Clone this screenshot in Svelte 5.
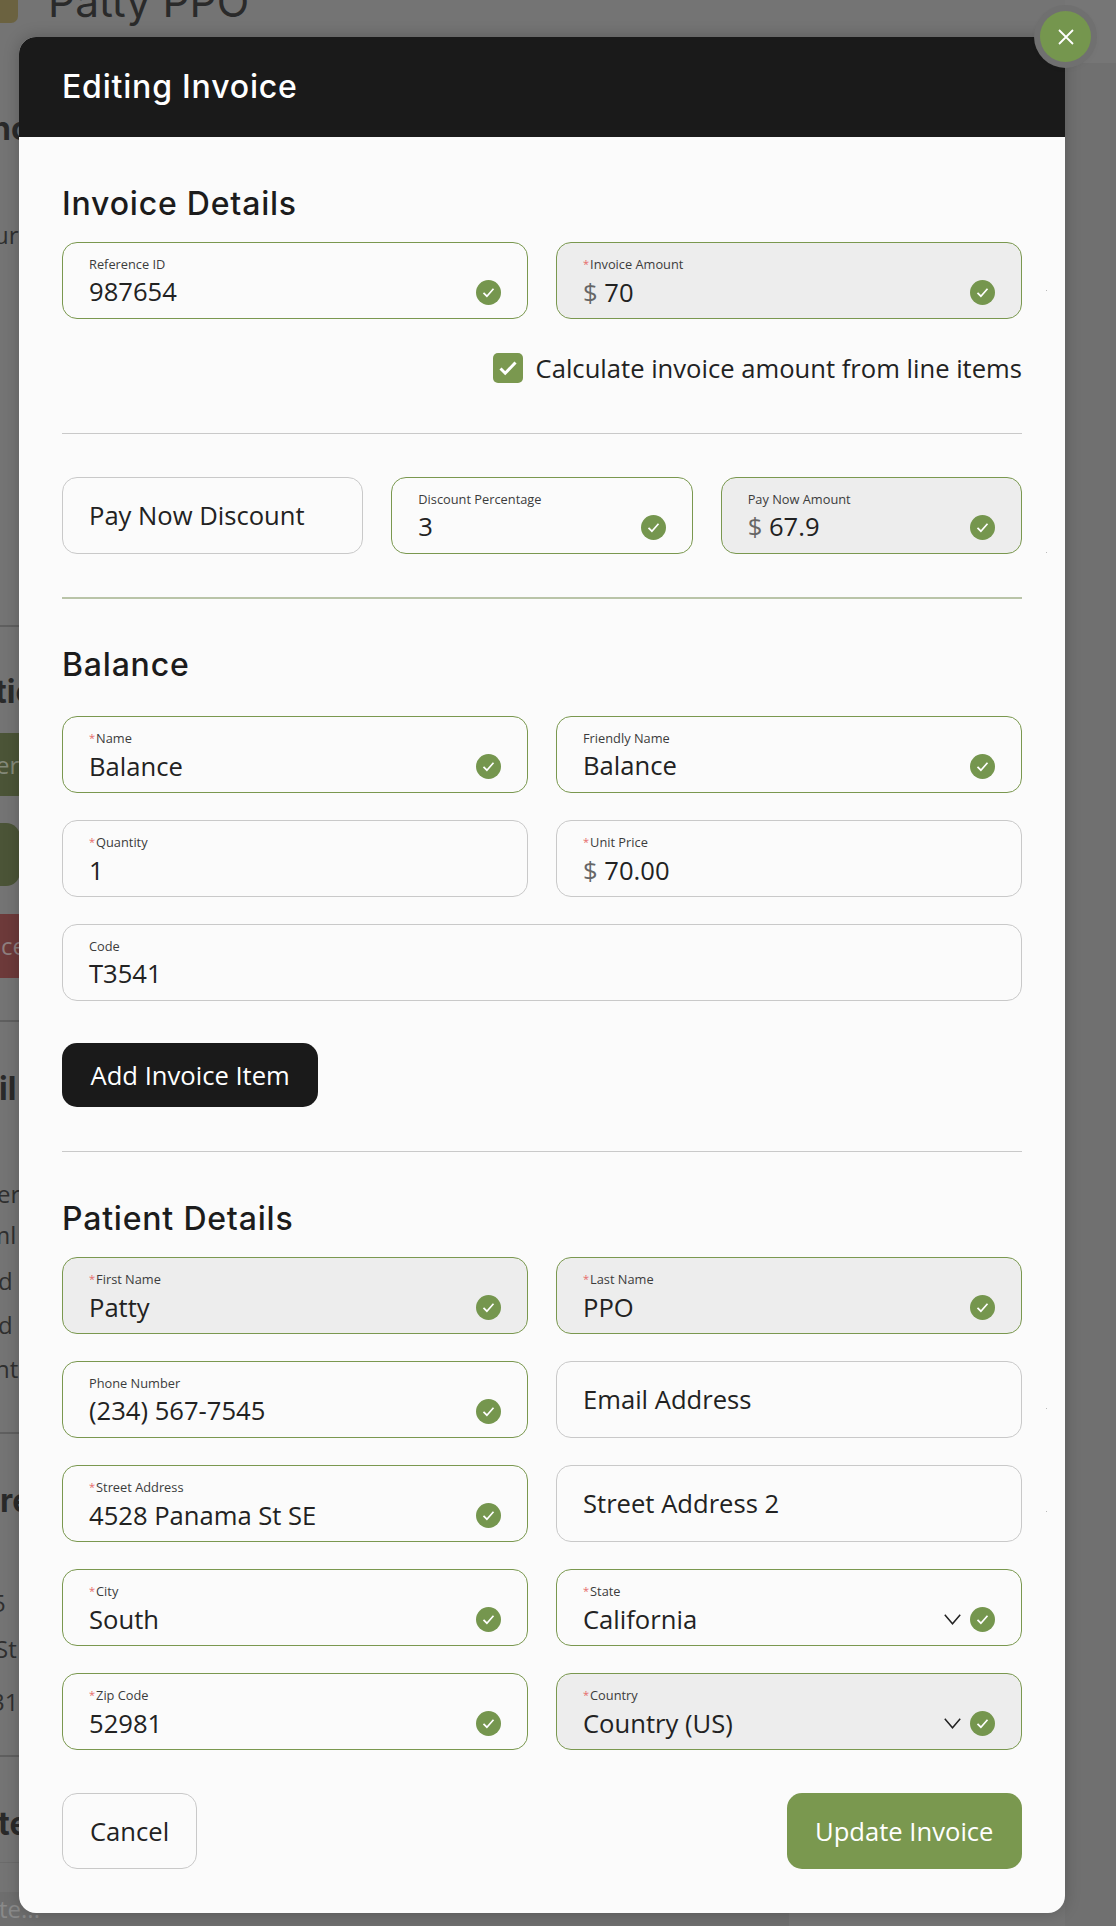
<script>
	// what peeks out from behind the modal, top to bottom (y = top edge of the row)
	const behind = [
		{ y: 109, h: 40, kind: 'head', x: -9, text: 'nc' },
		{ y: 219, h: 32, kind: 'copy', x: -6, text: 'ur' },
		{ y: 625, h: 2, kind: 'rule' },
		{ y: 672, h: 40, kind: 'head', x: -5, text: 'tio' },
		{ y: 733, h: 63, kind: 'green', x: -4, text: 'er' },
		{ y: 823, h: 63, kind: 'pill' },
		{ y: 914, h: 64, kind: 'red', x: 1, text: 'ce' },
		{ y: 1020, h: 2, kind: 'rule' },
		{ y: 1069, h: 40, kind: 'head', x: -1, text: 'il' },
		{ y: 1178, h: 32, kind: 'copy', x: -3, text: 'er' },
		{ y: 1219, h: 32, kind: 'copy', x: -12, text: 'ml' },
		{ y: 1265, h: 32, kind: 'copy', x: -2, text: 'd' },
		{ y: 1309, h: 32, kind: 'copy', x: -2, text: 'd' },
		{ y: 1353, h: 32, kind: 'copy', x: -5, text: 'nt' },
		{ y: 1432, h: 2, kind: 'rule' },
		{ y: 1481, h: 40, kind: 'head', x: 0, text: 're' },
		{ y: 1587, h: 32, kind: 'copy', x: -8, text: '5' },
		{ y: 1633, h: 32, kind: 'copy', x: -5, text: 'St' },
		{ y: 1686, h: 32, kind: 'copy', x: -9, text: '31' },
		{ y: 1755, h: 2, kind: 'rule' },
		{ y: 1804, h: 40, kind: 'head', x: -2, text: 'te' },
		{ y: 1862, h: 1, kind: 'rule faint' },
		{ y: 1892, h: 34, kind: 'copy note', x: -1, text: 'te...' }
	];
	const rows = behind.map((r, i) => ({
		...r,
		gap: r.y - (i ? behind[i - 1].y + behind[i - 1].h : 32)
	}));
</script>

{#snippet check()}
	<svg class="ok" width="25" height="25" viewBox="0 0 25 25" aria-hidden="true">
		<circle cx="12.5" cy="12.5" r="12.5" fill="#75964e" />
		<path d="M7.5 12.8l3.4 3.4 6.6-7.4" fill="none" stroke="#fff" stroke-width="1.7" />
	</svg>
{/snippet}

{#snippet field(label, value, opts = {})}
	<div class="field" class:valid={opts.valid} class:locked={opts.locked}>
		<div class="inner">
			<span class="label">{#if opts.req}<i>*</i>{/if}{label}</span>
			<span class="value">{#if opts.money}<em>$&nbsp;</em>{/if}{value}</span>
		</div>
		{#if opts.select}
			<svg class="chev" width="17" height="11" viewBox="0 0 17 11" aria-hidden="true">
				<path d="M.8.8l7.7 9 7.7-9" fill="none" stroke="#222" stroke-width="1.5" />
			</svg>
		{/if}
		{#if opts.valid}{@render check()}{/if}
		{#if opts.speck}<b class="speck" style="top:{opts.speck}px"></b>{/if}
	</div>
{/snippet}

{#snippet blank(text, speck)}
	<div class="field empty">
		<span class="value">{text}</span>
		{#if speck}<b class="speck" style="top:{speck}px"></b>{/if}
	</div>
{/snippet}

<div class="page">
	<div class="behind">
		<div class="top">
			<span class="avatar"></span>
			<span class="who">Patty PPO</span>
		</div>
		{#each rows as r}
			<div class="row {r.kind}" style="height:{r.h}px;line-height:{r.h}px;margin-top:{r.gap}px">
				{#if r.text}<span style="margin-left:{r.x}px">{r.text}</span>{/if}
			</div>
		{/each}
	</div>

	<div class="modal">
		<header>Editing Invoice</header>
		<button class="close" aria-label="Close">
			<svg width="16" height="16" viewBox="0 0 16 16" aria-hidden="true">
				<path d="M1 1l14 14M15 1L1 15" fill="none" stroke="#fff" stroke-width="1.8" />
			</svg>
		</button>

		<div class="body">
			<h2 class="first">Invoice Details</h2>
			<div class="two">
				{@render field('Reference ID', '987654', { valid: true })}
				{@render field('Invoice Amount', '70', { valid: true, locked: true, req: true, money: true, speck: 47 })}
			</div>
			<div class="calc">
				<span class="box">
					<svg width="30" height="30" viewBox="0 0 30 30" aria-hidden="true">
						<path d="M7.5 15.5l4.7 4.7L22.5 9.5" fill="none" stroke="#fff" stroke-width="3" />
					</svg>
				</span>
				Calculate invoice amount from line items
			</div>
			<hr class="thin after-calc" />
			<div class="three">
				{@render blank('Pay Now Discount')}
				{@render field('Discount Percentage', '3', { valid: true })}
				{@render field('Pay Now Amount', '67.9', { valid: true, locked: true, money: true, speck: 74 })}
			</div>
			<hr class="thick" />

			<h2 class="balance">Balance</h2>
			<div class="two">
				{@render field('Name', 'Balance', { valid: true, req: true })}
				{@render field('Friendly Name', 'Balance', { valid: true })}
				{@render field('Quantity', '1', { req: true })}
				{@render field('Unit Price', '70.00', { req: true, money: true })}
				<div class="wide">{@render field('Code', 'T3541')}</div>
			</div>
			<button class="btn dark">Add Invoice Item</button>
			<hr class="thin after-add" />

			<h2 class="patient">Patient Details</h2>
			<div class="two">
				{@render field('First Name', 'Patty', { valid: true, locked: true, req: true })}
				{@render field('Last Name', 'PPO', { valid: true, locked: true, req: true })}
				{@render field('Phone Number', '(234) 567-7545', { valid: true })}
				{@render blank('Email Address', 46)}
				{@render field('Street Address', '4528 Panama St SE', { valid: true, req: true })}
				{@render blank('Street Address 2', 45)}
				{@render field('City', 'South', { valid: true, req: true })}
				{@render field('State', 'California', { valid: true, req: true, select: true })}
				{@render field('Zip Code', '52981', { valid: true, req: true })}
				{@render field('Country', 'Country (US)', { valid: true, locked: true, req: true, select: true })}
			</div>

			<div class="actions">
				<button class="btn ghost">Cancel</button>
				<button class="btn go">Update Invoice</button>
			</div>
		</div>
	</div>
</div>

<style>
	:global(body) {
		margin: 0;
		font-family: 'Open Sans', 'Noto Sans', sans-serif;
	}
	.page {
		position: relative;
		width: 1116px;
		height: 1926px;
		overflow: hidden;
		background: linear-gradient(#767676 0 63px, #707070 63px) right / 51px 100% no-repeat, #747474;
		color: #222;
	}

	.behind {
		display: flex;
		flex-direction: column;
		width: 789px;
		height: 100%;
		color: #2f2f2f;
	}
	.top {
		display: flex;
		align-items: flex-start;
		flex: none;
		height: 60px;
		margin-top: -28px;
	}
	.avatar {
		width: 18px;
		height: 51px;
		background: #6b6240;
		border-radius: 0 7px 7px 0;
	}
	.who {
		margin-left: 30px;
		font: 400 42.5px/60px Inter, sans-serif;
		color: #2a2a2a;
	}
	.row {
		flex: none;
		white-space: nowrap;
		font-size: 24px;
	}
	.row span {
		display: inline-block;
	}
	.row.head {
		font: 700 32px/40px Inter, sans-serif;
		color: #2a2a2a;
	}
	.row.rule {
		background: #5f5f5f;
	}
	.row.faint {
		background: #6b6b6b;
	}
	.row.green {
		background: #4b5437;
		color: #858a7a;
	}
	.row.pill {
		width: 20px;
		background: #4b5437;
		border-radius: 0 14px 14px 0;
	}
	.row.red {
		background: #6d3a3a;
		color: #8f7f7f;
	}
	.row.note {
		background: rgba(0, 0, 0, 0.05);
		color: #8a8a8a;
	}

	.modal {
		position: absolute;
		left: 19px;
		top: 37px;
		width: 1046px;
		background: #fbfbfb;
		border-radius: 17px;
		box-shadow: 0 0 16px rgba(0, 0, 0, 0.22);
	}
	header {
		height: 100px;
		padding-left: 43px;
		background: #1a1a1a;
		border-radius: 17px 0 0 0;
		color: #fff;
		font: 500 32px/100px Inter, sans-serif;
		letter-spacing: 0.8px;
	}
	.close {
		position: absolute;
		right: -26px;
		top: -26px;
		display: flex;
		align-items: center;
		justify-content: center;
		width: 51px;
		height: 51px;
		padding: 0;
		border: 0;
		border-radius: 50%;
		background: #75964e;
		box-shadow: 0 0 0 6px #707070, 0 2px 10px rgba(0, 0, 0, 0.15);
	}

	.body {
		padding: 46px 43px 44px;
	}
	h2 {
		margin: 0;
		height: 40px;
		font: 500 32px/42px Inter, sans-serif;
		letter-spacing: 0.8px;
		color: #1c1c1c;
	}
	h2.first {
		margin-bottom: 19px;
	}
	h2.balance {
		margin-top: 45px;
		margin-bottom: 32px;
	}
	h2.patient {
		margin-top: 46px;
		margin-bottom: 19px;
	}

	.two,
	.three {
		display: grid;
		grid-auto-rows: 77px;
		gap: 27px 28px;
	}
	.two {
		grid-template-columns: 1fr 1fr;
	}
	.three {
		grid-template-columns: 1fr 1fr 1fr;
	}
	.wide {
		grid-column: 1 / -1;
		display: grid;
	}

	.field {
		position: relative;
		display: flex;
		align-items: center;
		box-sizing: border-box;
		padding: 0 26px;
		border: 1.5px solid #c9c9c9;
		border-radius: 15px;
		min-width: 0;
	}
	.field.valid {
		border-color: #7a984f;
	}
	.field.locked {
		background: #ededed;
	}
	.inner {
		display: flex;
		flex-direction: column;
		flex: 1;
		min-width: 0;
		padding-top: 2px;
	}
	.label {
		font-size: 12.8px;
		line-height: 20px;
		color: #3c3c3c;
	}
	.label i {
		color: #e66a6a;
		font-style: normal;
		font-size: 11px;
		position: relative;
		top: -1px;
		margin-right: 1px;
	}
	.value {
		font-size: 25.6px;
		line-height: 35px;
		white-space: nowrap;
	}
	.value em {
		font-style: normal;
		color: #666;
	}
	.ok {
		flex: none;
		margin-top: 23px;
	}
	.chev {
		flex: none;
		margin: 23px 9px 0 0;
	}
	.speck {
		position: absolute;
		left: calc(100% + 25px);
		width: 1px;
		height: 1px;
		background: #bbb;
	}

	.calc {
		display: flex;
		align-items: center;
		justify-content: flex-end;
		gap: 13px;
		height: 30px;
		margin-top: 34px;
		font-size: 25.6px;
		white-space: nowrap;
	}
	.box {
		display: block;
		width: 30px;
		height: 30px;
		background: #7a984f;
		border-radius: 5px;
	}

	hr {
		margin: 0;
		border: 0;
		background: #c9c9c9;
	}
	.thin {
		height: 1px;
	}
	.thick {
		height: 2px;
		margin-top: 43px;
		background: #b9c4a8;
	}
	.after-calc {
		margin-top: 50px;
		margin-bottom: 43px;
	}
	.after-add {
		margin-top: 44px;
	}

	.btn {
		display: block;
		box-sizing: border-box;
		padding: 0 28.5px;
		border: 0;
		border-radius: 15px;
		font-family: inherit;
		font-size: 25.6px;
	}
	.dark {
		height: 64px;
		margin-top: 42px;
		background: #1a1a1a;
		color: #fff;
	}
	.actions {
		display: flex;
		justify-content: space-between;
		margin-top: 43px;
	}
	.ghost {
		height: 76px;
		padding: 0 27px;
		background: transparent;
		border: 1.5px solid #c9c9c9;
		color: #222;
	}
	.go {
		height: 76px;
		background: #7a984f;
		color: #fff;
	}
</style>
